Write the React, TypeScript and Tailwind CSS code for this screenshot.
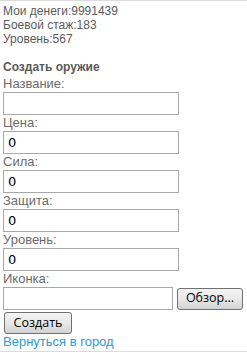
import { useState } from 'react';

const fields = ['Цена:', 'Сила:', 'Защита:', 'Уровень:'];

function Field({ label, value }: { label: string; value?: string }) {
  return (
    <div className="flex flex-col">
      <label className="h-[16px] text-[13px] leading-[16px] text-[#6b6b6b]">{label}</label>
      <input
        type="text"
        defaultValue={value}
        className="h-[23px] w-[176px] border border-[#a8a8a8] bg-white px-[4px] font-['DejaVu_Sans',sans-serif] text-[13px] text-black outline-none"
      />
    </div>
  );
}

function Btn({ children, className }: { children: string; className?: string }) {
  return (
    <button
      type="button"
      className={`flex items-center justify-center rounded-[3px] border border-[#707070] bg-gradient-to-b from-[#f4f4f4] via-[#e8e8e8] to-[#d2d2d2] font-['Open_Sans',sans-serif] text-[12.5px] leading-none text-black ${className ?? ''}`}
    >
      {children}
    </button>
  );
}

export default function App() {
  const [name] = useState('');

  return (
    <div className="w-[247px] h-[356px] bg-white font-['Liberation_Sans',Arial,sans-serif]">
      <div className="border-t border-[#dcdcdc] px-[3px] pt-[3px]">
        <div className="text-[12px] leading-[14px] text-[#5a5a5a]">
          <p>Мои денеги:9991439</p>
          <p>Боевой стаж:183</p>
          <p>Уровень:567</p>
          <p className="mt-[14px] font-bold">Создать оружие</p>
        </div>

        <div className="mt-[2px]">
          <Field label="Название:" value={name} />
          {fields.map((f) => (
            <Field key={f} label={f} value="0" />
          ))}

          <label className="block h-[16px] text-[13px] leading-[16px] text-[#6b6b6b]">Иконка:</label>
          <div className="flex items-center gap-[4px]">
            <input
              type="text"
              className="h-[23px] w-[170px] border border-[#a8a8a8] bg-white outline-none"
            />
            <Btn className="h-[22px] w-[66px]">Обзор...</Btn>
          </div>
          <div className="mt-[2px] pl-[1px]">
            <Btn className="h-[22px] w-[68px]">Создать</Btn>
          </div>
          <a href="#" className="block text-[13px] leading-[16px] text-[#3399cc]">
            Вернуться в город
          </a>
        </div>
      </div>
      <div className="mt-[1px] border-t border-[#dcdcdc]" />
    </div>
  );
}
